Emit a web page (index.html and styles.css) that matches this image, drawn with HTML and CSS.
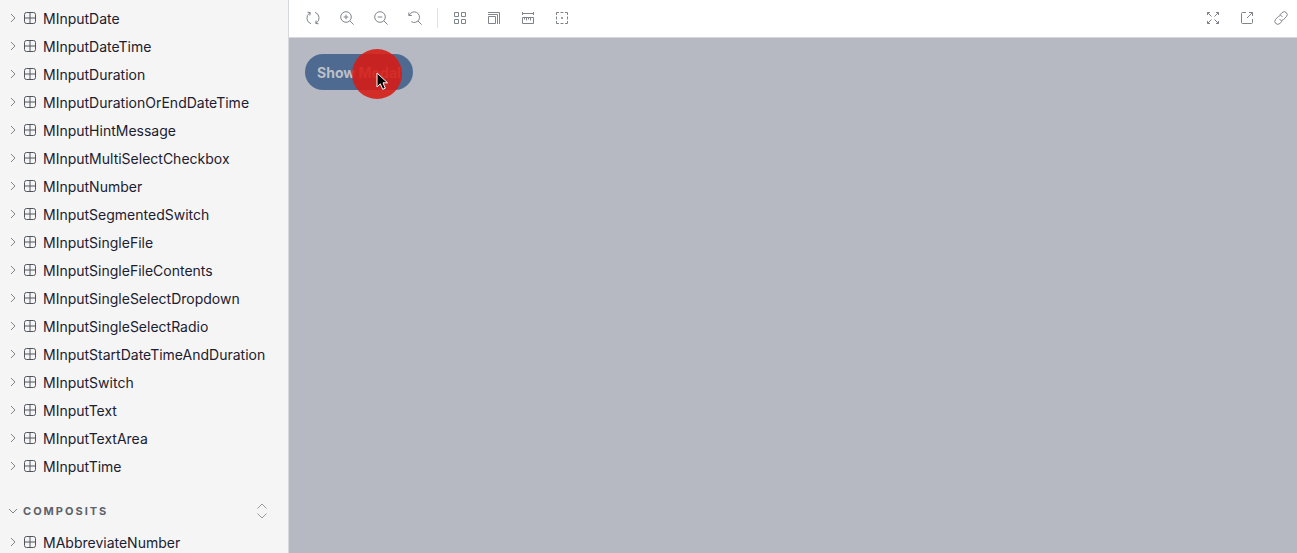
FILE: index.html
```html
<!DOCTYPE html>
<html lang="en">
<head>
<meta charset="utf-8">
<title>Component library</title>
<link rel="stylesheet" href="styles.css">
</head>
<body>
<svg class="sprite" aria-hidden="true">
  <symbol id="chevron" viewBox="0 0 8 10"><path d="M2 1l4 4-4 4"/></symbol>
  <symbol id="component" viewBox="0 0 14 14"><rect x="1.5" y="1.5" width="11" height="11" rx="2"/><path d="M7 1.5v11M1.5 7h11"/></symbol>
</svg>
<div class="app">
  <nav class="sidebar" aria-label="Components">
    <ul class="tree">
      <li><a class="item" href="#date"><svg class="chevron"><use href="#chevron"/></svg><svg class="component"><use href="#component"/></svg>MInputDate</a></li>
      <li><a class="item" href="#datetime"><svg class="chevron"><use href="#chevron"/></svg><svg class="component"><use href="#component"/></svg>MInputDateTime</a></li>
      <li><a class="item" href="#duration"><svg class="chevron"><use href="#chevron"/></svg><svg class="component"><use href="#component"/></svg>MInputDuration</a></li>
      <li><a class="item" href="#duration-or-end"><svg class="chevron"><use href="#chevron"/></svg><svg class="component"><use href="#component"/></svg>MInputDurationOrEndDateTime</a></li>
      <li><a class="item" href="#hint"><svg class="chevron"><use href="#chevron"/></svg><svg class="component"><use href="#component"/></svg>MInputHintMessage</a></li>
      <li><a class="item" href="#multi"><svg class="chevron"><use href="#chevron"/></svg><svg class="component"><use href="#component"/></svg>MInputMultiSelectCheckbox</a></li>
      <li><a class="item" href="#number"><svg class="chevron"><use href="#chevron"/></svg><svg class="component"><use href="#component"/></svg>MInputNumber</a></li>
      <li><a class="item" href="#segmented"><svg class="chevron"><use href="#chevron"/></svg><svg class="component"><use href="#component"/></svg>MInputSegmentedSwitch</a></li>
      <li><a class="item" href="#file"><svg class="chevron"><use href="#chevron"/></svg><svg class="component"><use href="#component"/></svg>MInputSingleFile</a></li>
      <li><a class="item" href="#file-contents"><svg class="chevron"><use href="#chevron"/></svg><svg class="component"><use href="#component"/></svg>MInputSingleFileContents</a></li>
      <li><a class="item" href="#dropdown"><svg class="chevron"><use href="#chevron"/></svg><svg class="component"><use href="#component"/></svg>MInputSingleSelectDropdown</a></li>
      <li><a class="item" href="#radio"><svg class="chevron"><use href="#chevron"/></svg><svg class="component"><use href="#component"/></svg>MInputSingleSelectRadio</a></li>
      <li><a class="item" href="#start"><svg class="chevron"><use href="#chevron"/></svg><svg class="component"><use href="#component"/></svg>MInputStartDateTimeAndDuration</a></li>
      <li><a class="item" href="#switch"><svg class="chevron"><use href="#chevron"/></svg><svg class="component"><use href="#component"/></svg>MInputSwitch</a></li>
      <li><a class="item" href="#text"><svg class="chevron"><use href="#chevron"/></svg><svg class="component"><use href="#component"/></svg>MInputText</a></li>
      <li><a class="item" href="#textarea"><svg class="chevron"><use href="#chevron"/></svg><svg class="component"><use href="#component"/></svg>MInputTextArea</a></li>
      <li><a class="item" href="#time"><svg class="chevron"><use href="#chevron"/></svg><svg class="component"><use href="#component"/></svg>MInputTime</a></li>
    </ul>
    <div class="group">
      <button class="group-toggle" aria-expanded="true"><svg class="group-chevron" viewBox="0 0 10 8"><path d="M1 2l4 4 4-4"/></svg>COMPOSITS</button>
      <button class="expand" aria-label="Expand all"><svg viewBox="0 0 14 16"><path d="M2.500 5.500L7 1l4.500 4.500M2.500 10.500L7 15l4.500-4.500"/></svg></button>
    </div>
    <ul class="tree">
      <li><a class="item" href="#abbreviate"><svg class="chevron"><use href="#chevron"/></svg><svg class="component"><use href="#component"/></svg>MAbbreviateNumber</a></li>
    </ul>
  </nav>
  <main class="main">
    <header class="toolbar">
      <button class="tool" aria-label="Remount component"><svg viewBox="0 0 14 14"><path d="M5 12.700A6 6 0 0 1 3.800 1.900M9 1.300a6 6 0 0 1 1.200 10.800M1.500 1.200l2.800.4-.5 2.900M12.500 12.800l-2.800-.4.5-2.900"/></svg></button>
      <button class="tool" aria-label="Zoom in"><svg viewBox="0 0 14 14"><circle cx="6" cy="6" r="5.300"/><path d="M9.800 9.800l3.800 3.800M6 3.700v4.600M3.700 6h4.600"/></svg></button>
      <button class="tool" aria-label="Zoom out"><svg viewBox="0 0 14 14"><circle cx="6" cy="6" r="5.300"/><path d="M9.800 9.800l3.800 3.800M3.700 6h4.600"/></svg></button>
      <button class="tool" aria-label="Reset zoom"><svg viewBox="0 0 14 14"><path d="M.800 1.500v3h3M1.200 4.500A5.300 5.300 0 1 1 3.300 10.600M9.900 9.900l3.700 3.700"/></svg></button>
      <span class="separator"></span>
      <button class="tool" aria-label="Background grid"><svg viewBox="0 0 14 14"><path d="M1.500 1.500h4v4h-4zM8.500 1.500h4v4h-4zM1.500 8.500h4v4h-4zM8.500 8.500h4v4h-4z"/></svg></button>
      <button class="tool" aria-label="Viewport"><svg viewBox="0 0 14 14"><path d="M1.500 5.500h7v7h-7zM1 3.500h9.500v9.500M1 1.500h11.500V13"/></svg></button>
      <button class="tool" aria-label="Measure"><svg viewBox="0 0 14 14"><path d="M1.500 2.500h11M1.500 1v3M12.500 1v3M1.500 6.500h11v6h-11zM3.500 6.500v2M5.500 6.500v3M7.500 6.500v2M9.500 6.500v3"/></svg></button>
      <button class="tool" aria-label="Outline"><svg viewBox="0 0 14 14"><path d="M1.500 4V1.500H4M5.500 1.500h3M10 1.500h2.500V4M12.500 5.500v3M12.500 10v2.500H10M8.500 12.500h-3M4 12.500H1.500V10M1.500 8.500v-3M6 7h2M7 6v2"/></svg></button>
      <span class="spacer"></span>
      <button class="tool" aria-label="Full screen"><svg viewBox="0 0 14 14"><path d="M1.500 4V1.500H4M1.500 1.500l4 4M10 1.500h2.500V4M12.500 1.500l-4 4M1.500 10v2.500H4M1.500 12.500l4-4M12.500 10v2.500H10M12.500 12.500l-4-4"/></svg></button>
      <button class="tool" aria-label="Open in new tab"><svg viewBox="0 0 14 14"><path d="M6 1.500H2.500a1 1 0 0 0-1 1v9a1 1 0 0 0 1 1h9a1 1 0 0 0 1-1V8M9 1.500h3.500V5M12.500 1.500L7 7"/></svg></button>
      <button class="tool" aria-label="Copy link"><svg viewBox="0 0 14 14"><path d="M5.700 4l2.400-2.400a2.800 2.800 0 0 1 4.200 4.200L9.700 8.400a2.800 2.800 0 0 1-4.200 0M8.300 10l-2.400 2.400a2.800 2.800 0 0 1-4.200-4.200l2.600-2.600a2.800 2.800 0 0 1 4.200 0"/></svg></button>
    </header>
    <section class="canvas">
      <div class="target">
        <button class="show">Show Modal</button>
        <span class="click"></span>
        <svg class="cursor" viewBox="0 0 13 19"><path d="M1 1v14l3.300-3.200 2.400 5.500 2.600-1.100L7 10.800h4.500z"/></svg>
      </div>
    </section>
  </main>
</div>
</body>
</html>
```
FILE: styles.css
```css
* { box-sizing: border-box; }
body {
  margin: 0;
  font-family: Inter, "Liberation Sans", sans-serif;
  font-size: 14px;
  color: #1b2030;
}
button {
  margin: 0;
  padding: 0;
  border: 0;
  background: none;
  font: inherit;
  color: inherit;
}
svg {
  display: block;
  flex: none;
  fill: none;
  stroke: currentColor;
}
.sprite { position: absolute; width: 0; height: 0; }
.app { display: flex; height: 100vh; overflow: hidden; }
.sidebar {
  flex: none;
  width: 289px;
  padding-top: 4px;
  overflow: hidden;
  background: #f5f5f5;
  border-right: 1px solid #d5d9de;
}
.tree { margin: 0; padding: 0; list-style: none; }
.item {
  display: flex;
  align-items: center;
  height: 28px;
  padding-left: 9px;
  color: inherit;
  text-decoration: none;
}
.chevron { width: 8px; height: 10px; margin-right: 6px; color: #80858c; }
.component { width: 14px; height: 14px; margin-right: 6px; color: #50565c; }
.group {
  display: flex;
  align-items: center;
  justify-content: space-between;
  height: 28px;
  margin: 17px 19px 3px 8px;
}
.group-toggle {
  display: flex;
  align-items: center;
  gap: 5px;
  font-size: 11px;
  font-weight: 700;
  letter-spacing: 2px;
  color: #5c6269;
}
.group-chevron { width: 10px; height: 8px; color: #80858c; }
.expand svg { width: 14px; height: 16px; color: #969a9f; }
.main { display: flex; flex: 1; flex-direction: column; min-width: 0; }
.toolbar {
  display: flex;
  flex: none;
  align-items: center;
  gap: 6px;
  height: 38px;
  padding: 0 2px 2px 10px;
  background: #fff;
  border-bottom: 1px solid #d5d8dc;
}
.tool {
  display: grid;
  place-items: center;
  width: 28px;
  height: 28px;
  color: #7f848b;
}
.tool svg { width: 14px; height: 14px; }
.separator { width: 1px; height: 20px; margin: 0 2px; background: #dfe1e4; }
.spacer { flex: 1; }
.canvas { flex: 1; padding: 16px; background: #b6b9c1; }
.target { position: relative; width: max-content; }
.show {
  display: block;
  height: 36px;
  padding: 0 12px;
  border-radius: 18px;
  background: #4e6a91;
  font-weight: 700;
  color: #bcc0c7;
}
.click {
  position: absolute;
  top: -5px;
  left: 47px;
  width: 50px;
  height: 50px;
  border-radius: 50%;
  background: rgba(215, 25, 18, 0.88);
}
.cursor {
  position: absolute;
  top: 18px;
  left: 71px;
  width: 13px;
  height: 19px;
  fill: #000;
  stroke: #fff;
}
```
